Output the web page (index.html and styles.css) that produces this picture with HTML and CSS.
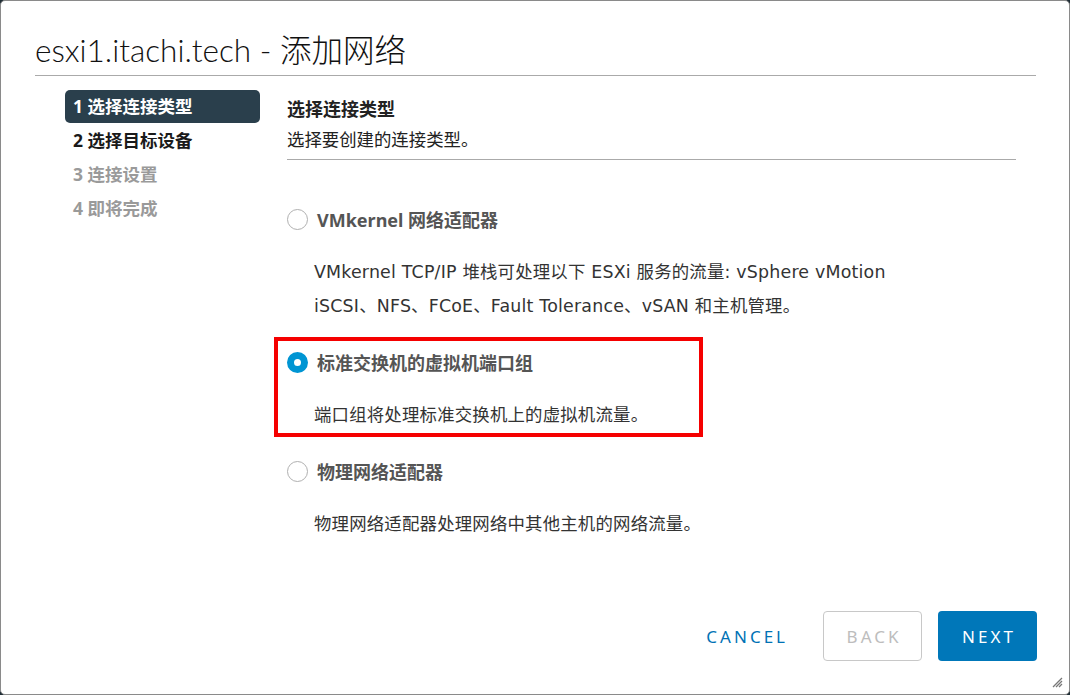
FILE: index.html
```html
<!DOCTYPE html>
<html lang="zh-CN">
<head>
<meta charset="utf-8">
<title>添加网络</title>
<link rel="stylesheet" href="styles.css">
</head>
<body>
<div class="modal">
  <header class="modal-header">
    <h1 class="modal-title">esxi1.itachi.tech - 添加网络</h1>
  </header>
  <div class="modal-body">
    <nav class="steps">
      <div class="step active">1 选择连接类型</div>
      <div class="step done">2 选择目标设备</div>
      <div class="step">3 连接设置</div>
      <div class="step">4 即将完成</div>
    </nav>
    <main class="page">
      <div class="page-head">
        <div class="page-title">选择连接类型</div>
        <div class="page-sub">选择要创建的连接类型。</div>
      </div>
      <div class="options">
        <div class="option">
          <div class="option-label"><span class="radio"></span>VMkernel 网络适配器</div>
          <div class="option-desc">VMkernel TCP/IP 堆栈可处理以下 ESXi 服务的流量: vSphere vMotion<br>iSCSI、NFS、FCoE、Fault Tolerance、vSAN 和主机管理。</div>
        </div>
        <div class="option highlighted">
          <div class="option-label"><span class="radio checked"></span>标准交换机的虚拟机端口组</div>
          <div class="option-desc">端口组将处理标准交换机上的虚拟机流量。</div>
          <div class="red-box"></div>
        </div>
        <div class="option">
          <div class="option-label"><span class="radio"></span>物理网络适配器</div>
          <div class="option-desc">物理网络适配器处理网络中其他主机的网络流量。</div>
        </div>
      </div>
    </main>
  </div>
  <footer class="modal-footer">
    <button class="btn btn-link">CANCEL</button>
    <button class="btn btn-outline" disabled>BACK</button>
    <button class="btn btn-primary">NEXT</button>
  </footer>
  <svg class="resize" width="12" height="12" viewBox="0 0 12 12">
    <path d="M11 2 L2 11 M11 5 L5 11 M11 8 L8 11" stroke="#777" stroke-width="1.3"/>
  </svg>
</div>
</body>
</html>
```

FILE: styles.css
```css
* { box-sizing: border-box; }
html, body {
  margin: 0;
  padding: 0;
  background: #1f2d35;
  width: 1070px;
  height: 695px;
  overflow: hidden;
}
body {
  font-family: "Noto Sans", "Noto Sans CJK SC", sans-serif;
  color: #333;
}
.modal {
  position: relative;
  width: 1070px;
  height: 695px;
  background: #fff;
  border: 1px solid #8a8a8a;
  border-radius: 5px;
  display: flex;
  flex-direction: column;
}
.modal-header {
  padding: 29px 33px 0 34px;
}
.modal-title {
  margin: 0;
  font-family: "Lato", "Noto Sans CJK SC", sans-serif;
  font-size: 31.5px;
  font-weight: 300;
  line-height: 40px;
  color: #111;
  padding-bottom: 5px;
  border-bottom: 1px solid #aaa;
}
.modal-body {
  display: flex;
  flex: 1;
  padding-top: 14px;
}
.steps {
  width: 195px;
  margin-left: 64px;
  display: flex;
  flex-direction: column;
}
.step {
  height: 34px;
  line-height: 32px;
  padding-left: 8px;
  font-size: 17.5px;
  font-weight: 700;
  color: #9a9a9a;
  border-radius: 5px;
}
.step.active {
  background: #2a3f4c;
  color: #fff;
  height: 33px;
  margin-bottom: 1px;
}
.step.done { color: #1a1a1a; }
.page {
  margin-left: 27px;
  width: 729px;
}
.page-head {
  padding-bottom: 5px;
  border-bottom: 1px solid #aaa;
  margin-top: 4px;
}
.page-title {
  font-size: 18px;
  font-weight: 700;
  line-height: 30px;
  color: #222;
}
.page-sub {
  font-size: 17.4px;
  line-height: 30px;
  color: #222;
}
.options {
  display: flex;
  flex-direction: column;
  gap: 24px;
  margin-top: 44px;
}
.option { position: relative; }
.option-label {
  display: flex;
  align-items: center;
  height: 30px;
  font-size: 18px;
  font-weight: 700;
  color: #555;
}
.radio {
  width: 21px;
  height: 21px;
  border: 1px solid #b0b0b0;
  border-radius: 50%;
  margin-right: 9px;
  flex: none;
  position: relative;
}
.radio.checked {
  border: 7px solid #0095d3;
  background: #fff;
}
.option-desc {
  margin-top: 21px;
  margin-left: 27px;
  font-family: "DejaVu Sans", "Noto Sans CJK SC", sans-serif;
  font-size: 17.4px;
  letter-spacing: 0.2px;
  line-height: 34px;
  color: #333;
}
.red-box {
  position: absolute;
  left: -13px;
  top: -10px;
  width: 429px;
  height: 100px;
  border: 4px solid #f50000;
  pointer-events: none;
}
.modal-footer {
  display: flex;
  justify-content: flex-end;
  align-items: center;
  gap: 16px;
  padding: 0 32px 33px 0;
}
.btn {
  height: 50px;
  min-width: 99px;
  padding: 0 18px;
  font-family: "Noto Sans", sans-serif;
  font-size: 17px;
  font-weight: 400;
  letter-spacing: 3px;
  text-indent: 3px;
  border-radius: 4px;
  border: 1px solid transparent;
  background: none;
}
.btn-link { color: #0072b5; }
.btn-outline { border-color: #c8c8c8; color: #bdbdbd; background: #fff; }
.btn-primary { background: #0077b9; color: #fff; }
.resize {
  position: absolute;
  right: 6px;
  bottom: 6px;
}
```
